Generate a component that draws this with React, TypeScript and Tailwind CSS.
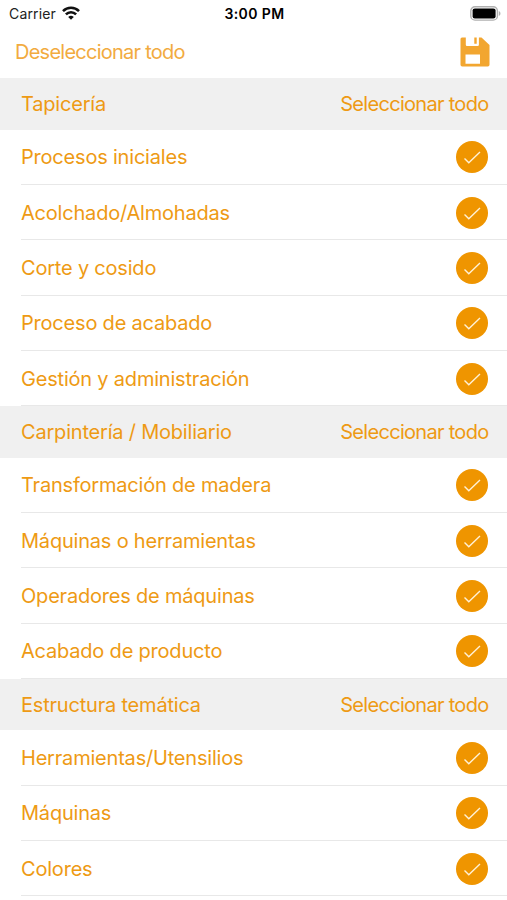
interface Section {
  title: string;
  items: string[];
}

const sections: Section[] = [
  { title: "Tapicería", items: ["Procesos iniciales", "Acolchado/Almohadas", "Corte y cosido", "Proceso de acabado", "Gestión y administración"] },
  { title: "Carpintería / Mobiliario", items: ["Transformación de madera", "Máquinas o herramientas", "Operadores de máquinas", "Acabado de producto"] },
  { title: "Estructura temática", items: ["Herramientas/Utensilios", "Máquinas", "Colores"] },
];

function Check() {
  return (
    <svg width="32" height="32" viewBox="0 0 32 32" className="shrink-0">
      <circle cx="16" cy="16" r="16" fill="#ef9500" />
      <path d="M8.500 17.500l4.300 4.300L24 11" fill="none" stroke="#fff1d6" strokeWidth="1.4" />
    </svg>
  );
}

function Wifi() {
  return (
    <svg width="18" height="14" viewBox="0 0 18 14" fill="none" stroke="#111" strokeWidth="2.6">
      <path d="M1 5.1a11.400 11.400 0 0 1 16 0" />
      <path d="M3.900 8.400a7.200 7.200 0 0 1 10.200 0" />
      <path d="M9 13.800L6.200 11a4 4 0 0 1 5.600 0z" fill="#111" stroke="none" />
    </svg>
  );
}

function Battery() {
  return (
    <svg width="31" height="15" viewBox="0 0 31 15">
      <rect x="0.8" y="0.7" width="26.6" height="13.4" rx="4.2" fill="#fff" stroke="#b0b0b0" strokeWidth="1.4" />
      <rect x="2.600" y="2.400" width="23" height="10" rx="2.2" fill="#000" />
      <path d="M28.800 5v5c2.200-.9 2.200-4.100 0-5z" fill="#b0b0b0" />
    </svg>
  );
}

function Save() {
  return (
    <svg width="30" height="30" viewBox="0 0 30 30">
      <path
        fillRule="evenodd"
        fill="#f2a630"
        d="M2 .5h3.800v7.300q0 1.200 1.200 1.200h10.700q1.200 0 1.200-1.200V.5h2.600L29.500 8v19.800q0 1.700-1.700 1.700H2.200Q.5 29.500 .5 27.800V2Q.5 .5 2 .5zM5.500 17.500v9.200h14.500v-9.200zM14.300 .5h2.400v6.300h-2.400z"
      />
    </svg>
  );
}

export default function App() {
  return (
    <div className="h-[900px] w-[507px] overflow-hidden bg-white font-['Inter',sans-serif] text-[20px] tracking-[-0.2px] text-[#ee9a14]">
      <header className="h-[78.2px]">
        <div className="grid h-[26px] grid-cols-3 items-center pl-[9px] pr-[6px] text-[14px] tracking-normal text-[#222]">
          <div className="flex items-center gap-[6px]">
            <span className="tracking-[0.15px]">Carrier</span>
            <Wifi />
          </div>
          <span className="pr-[1px] text-center font-semibold tracking-[0.4px] text-black">3:00 PM</span>
          <div className="flex justify-end"><Battery /></div>
        </div>
        <div className="flex h-[52px] items-center justify-between pl-[15px] pr-[17.5px] text-[#f2ab3f]">
          <span className="tracking-[-0.75px]">Deseleccionar todo</span>
          <Save />
        </div>
      </header>
      {sections.map((s) => (
        <section key={s.title}>
          <div className="flex h-[51.5px] items-center justify-between bg-[#f0f0f0] pl-[21px] pr-[18.5px] pt-px">
            <span>{s.title}</span>
            <span className="tracking-[-0.7px]">Seleccionar todo</span>
          </div>
          {s.items.map((t) => (
            <div key={t} className="ml-[21px] flex h-[55.3px] items-center justify-between border-b border-[#e8e8e8] pr-[19.5px] pt-px">
              <span>{t}</span>
              <Check />
            </div>
          ))}
        </section>
      ))}
    </div>
  );
}
